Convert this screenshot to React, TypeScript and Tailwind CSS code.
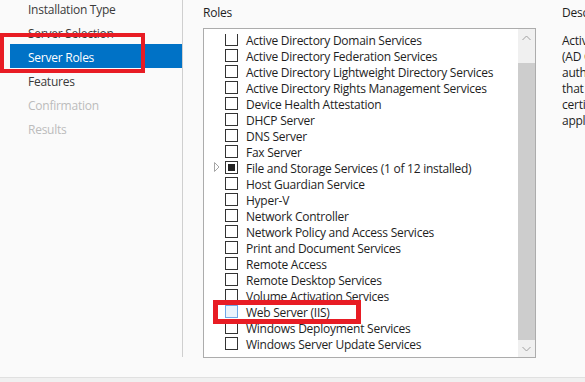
import React from "react";

const font = { fontFamily: '"Segoe UI", "Open Sans", sans-serif' };

type Role = { name: string; checked?: boolean; expand?: boolean; hover?: boolean };

const roles: Role[] = [
  { name: "Active Directory Domain Services" },
  { name: "Active Directory Federation Services" },
  { name: "Active Directory Lightweight Directory Services" },
  { name: "Active Directory Rights Management Services" },
  { name: "Device Health Attestation" },
  { name: "DHCP Server" },
  { name: "DNS Server" },
  { name: "Fax Server" },
  { name: "File and Storage Services (1 of 12 installed)", checked: true, expand: true },
  { name: "Host Guardian Service" },
  { name: "Hyper-V" },
  { name: "Network Controller" },
  { name: "Network Policy and Access Services" },
  { name: "Print and Document Services" },
  { name: "Remote Access" },
  { name: "Remote Desktop Services" },
  { name: "Volume Activation Services" },
  { name: "Web Server (IIS)", hover: true },
  { name: "Windows Deployment Services" },
  { name: "Windows Server Update Services" },
];

const steps = [
  { label: "Installation Type", state: "done" },
  { label: "Server Selection", state: "done" },
  { label: "Server Roles", state: "active" },
  { label: "Features", state: "done" },
  { label: "Confirmation", state: "off" },
  { label: "Results", state: "off" },
];

const description = [
  "Active Directory Certificate Services",
  "(AD CS) is used to create certification",
  "authorities and related role services",
  "that allow you to issue and manage",
  "certificates used in a variety of",
  "applications.",
];

function Checkbox({ checked, hover }: { checked?: boolean; hover?: boolean }) {
  return (
    <div
      className={`w-[13px] h-[13px] shrink-0 border flex items-center justify-center ${
        hover ? "border-[#6ea6e6] bg-[#eaf3fc]" : "border-[#333333] bg-white"
      }`}
    >
      {checked && <div className="w-[7px] h-[7px] bg-[#222222]" />}
    </div>
  );
}

function RoleRow({ role }: { role: Role }) {
  return (
    <div className="flex items-center h-[16px] pl-[10px]">
      <div className="w-[11px] shrink-0 flex items-center">
        {role.expand && (
          <svg width="6" height="10" viewBox="0 0 6 10">
            <path d="M0.5 0.5 L5 5 L0.5 9.5 Z" fill="none" stroke="#a6a6a6" strokeWidth="1" />
          </svg>
        )}
      </div>
      <Checkbox checked={role.checked} hover={role.hover} />
      <span className="ml-[8px] mt-[4px] whitespace-nowrap text-[#1e1e1e] leading-[16px]">{role.name}</span>
    </div>
  );
}

function Chevron({ up }: { up?: boolean }) {
  return (
    <svg width="9" height="6" viewBox="0 0 9 6">
      <path
        d={up ? "M0.5 5 L4.5 1 L8.5 5" : "M0.5 1 L4.5 5 L8.5 1"}
        fill="none"
        stroke="#a0a0a0"
        strokeWidth="1"
      />
    </svg>
  );
}

export default function App() {
  return (
    <div
      className="relative w-[585px] h-[382px] overflow-hidden bg-[#fafafa] text-[12px] tracking-[-0.25px] flex flex-col"
      style={font}
    >
      <div className="flex h-[377px]">
        {/* wizard steps */}
        <div className="w-[183px] shrink-0 h-[357px] border-r border-[#cfcfcf]">
          <div className="-mt-[4px]">
            {steps.map((s) => (
              <div
                key={s.label}
                className={`h-[24px] flex items-center ml-[10px] pl-[18px] pt-[4px] ${
                  s.state === "active"
                    ? "bg-[#0072c6] text-white"
                    : s.state === "off"
                    ? "text-[#bcbcbc]"
                    : "text-[#3b3b3b]"
                }`}
              >
                {s.label}
              </div>
            ))}
          </div>
        </div>

        {/* roles */}
        <div className="pl-[20px] shrink-0">
          <div className="h-[28px] flex items-center pb-[3px] text-[#1e1e1e]">Roles</div>
          <div className="w-[333px] h-[330px] border border-[#acacac] bg-white flex">
            <div className="flex-1 pt-[5px]">
              <div className="h-[322px] overflow-hidden">
                <div className="-mt-[3px]">
                  {roles.map((r) => (
                    <RoleRow key={r.name} role={r} />
                  ))}
                </div>
              </div>
            </div>
            <div className="w-[17px] shrink-0 bg-[#f0f0f0] flex flex-col">
              <div className="h-[17px] flex items-center justify-center">
                <Chevron up />
              </div>
              <div className="h-[17px]" />
              <div className="flex-1 bg-[#cdcdcd]" />
              <div className="h-[17px] flex items-center justify-center">
                <Chevron />
              </div>
            </div>
          </div>
        </div>

        {/* description */}
        <div className="pl-[26px] shrink-0 text-[#1e1e1e]">
          <div className="h-[28px] flex items-center pb-[3px] whitespace-nowrap">Description</div>
          <div className="pt-[5px]">
            {description.map((l) => (
              <div key={l} className="h-[16px] leading-[16px] whitespace-nowrap">
                {l}
              </div>
            ))}
          </div>
        </div>
      </div>

      <div className="flex-1 bg-[#f0f0f0] border-t border-[#e0e0e0]" />

      {/* annotation boxes */}
      <div className="absolute left-0 top-[33px] w-[145px] h-[40px] border-4 border-[#e81c24]" />
      <div className="absolute left-[213px] top-[300px] w-[148px] h-[24px] border-[5px] border-[#e81c24]" />
    </div>
  );
}
